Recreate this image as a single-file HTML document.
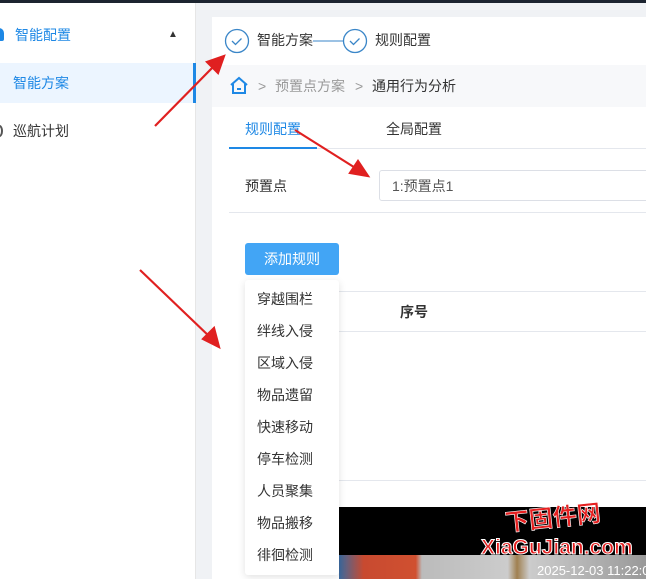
<!DOCTYPE html>
<html><head><meta charset="utf-8"><style>
*{margin:0;padding:0;box-sizing:border-box}
body{width:646px;height:579px;overflow:hidden;position:relative;background:#f0f2f5;font-family:"Liberation Sans","Noto Sans CJK SC",sans-serif;font-size:14px;color:#333}
.a{position:absolute;line-height:1}
</style></head><body>
<div class="a" style="left:0;top:0;width:646px;height:3px;background:#1c2430"></div>
<div class="a" style="left:0;top:3px;width:196px;height:576px;background:#fff;border-right:1px solid #e6e6e6"></div>
<div class="a" style="left:-6px;top:28px;width:10px;height:13px;background:#1e88e5;border-radius:5px 5px 2px 2px"></div>
<div class="a" style="left:15px;top:28px;color:#1e88e5">智能配置</div>
<div class="a" style="left:168px;top:30px;font-size:10px;color:#333">&#9650;</div>
<div class="a" style="left:0;top:63px;width:196px;height:40px;background:#ecf5ff"></div>
<div class="a" style="left:193px;top:63px;width:3px;height:40px;background:#1e88e5"></div>
<div class="a" style="left:13px;top:76px;color:#1e88e5">智能方案</div>
<div class="a" style="left:-4px;top:125px;width:7px;height:12px;border:2px solid #555;border-radius:50%"></div>
<div class="a" style="left:13px;top:124px">巡航计划</div>

<div class="a" style="left:212px;top:17px;width:434px;height:562px;background:#fff"></div>
<div class="a" style="left:212px;top:65px;width:434px;height:42px;background:#f7f8fa"></div>
<svg class="a" style="left:224px;top:28px" width="210" height="26">
<circle cx="13" cy="13" r="11.5" fill="none" stroke="#3a86c8" stroke-width="1.3"/>
<path d="M8 13l3.5 3.5 6-6" fill="none" stroke="#3a86c8" stroke-width="1.3"/>
<line x1="89" y1="13" x2="120" y2="13" stroke="#3a86c8" stroke-width="1"/>
<circle cx="131" cy="13" r="11.5" fill="none" stroke="#3a86c8" stroke-width="1.3"/>
<path d="M126 13l3.5 3.5 6-6" fill="none" stroke="#3a86c8" stroke-width="1.3"/>
</svg>
<div class="a" style="left:257px;top:33px">智能方案</div>
<div class="a" style="left:375px;top:33px">规则配置</div>
<svg class="a" style="left:229px;top:76px" width="20" height="18"><path d="M2 9L10 2l8 7M4 8v9h12V8M8 13h4" fill="none" stroke="#1e88e5" stroke-width="2"/></svg>
<div class="a" style="left:258px;top:79px;color:#999">&gt;</div>
<div class="a" style="left:275px;top:79px;color:#999">预置点方案</div>
<div class="a" style="left:355px;top:79px;color:#999">&gt;</div>
<div class="a" style="left:372px;top:79px;color:#333">通用行为分析</div>
<div class="a" style="left:245px;top:122px;color:#1e88e5">规则配置</div>
<div class="a" style="left:386px;top:122px">全局配置</div>
<div class="a" style="left:229px;top:148px;width:417px;height:1px;background:#e4e7ed"></div>
<div class="a" style="left:229px;top:147px;width:88px;height:2px;background:#1e88e5"></div>
<div class="a" style="left:245px;top:179px">预置点</div>
<div class="a" style="left:379px;top:170px;width:280px;height:31px;border:1px solid #dcdfe6;border-radius:3px;padding:8px 12px;color:#555">1:预置点1</div>
<div class="a" style="left:229px;top:212px;width:417px;height:1px;background:#e4e7ed"></div>
<div class="a" style="left:245px;top:243px;width:94px;height:32px;background:#42a5f5;border-radius:3px;color:#fff;text-align:center;line-height:32px">添加规则</div>
<div class="a" style="left:339px;top:291px;width:307px;height:1px;background:#e4e7ed"></div>
<div class="a" style="left:400px;top:305px;font-weight:bold">序号</div>
<div class="a" style="left:339px;top:331px;width:307px;height:1px;background:#e4e7ed"></div>
<div class="a" style="left:339px;top:480px;width:307px;height:1px;background:#e4e7ed"></div>
<div class="a" style="left:339px;top:507px;width:307px;height:48px;background:#000"></div>
<div class="a" style="left:339px;top:555px;width:307px;height:24px;background:linear-gradient(90deg,#3a6aa0 0,#c84a30 8%,#d05030 25%,#bbb 27%,#ccc 55%,#a08050 58%,#ccc 62%,#999 100%)"></div>
<div class="a" style="left:505px;top:507px;color:#e52020;font-size:24px;font-weight:bold;transform:rotate(-6deg);-webkit-text-stroke:0.6px #fff">下固件网</div>
<div class="a" style="left:481px;top:537px;color:#e52020;font-size:21px;font-weight:bold;-webkit-text-stroke:1px #fff">XiaGuJian.com</div>
<div class="a" style="left:537px;top:564px;color:#fff;font-size:13px;white-space:nowrap">2025-12-03 11:22:0</div>
<div class="a" style="left:245px;top:280px;width:94px;height:295px;background:#fff;border-radius:3px;box-shadow:0 2px 8px rgba(0,0,0,.12)"></div>
<div class="a" style="left:257px;top:283px;line-height:32px;color:#333">穿越围栏<br>绊线入侵<br>区域入侵<br>物品遗留<br>快速移动<br>停车检测<br>人员聚集<br>物品搬移<br>徘徊检测</div>
<svg class="a" style="left:0;top:0" width="646" height="579">
<g stroke="#e02020" stroke-width="2.2" fill="#e02020">
<line x1="155" y1="126" x2="214" y2="66"/><polygon points="224,56 218,73 207,62"/>
<line x1="295" y1="130" x2="357" y2="169"/><polygon points="368,176 350,173 358,161"/>
<line x1="140" y1="270" x2="211" y2="338"/><polygon points="219,347 203,339 214,328"/>
</g></svg>
</body></html>
